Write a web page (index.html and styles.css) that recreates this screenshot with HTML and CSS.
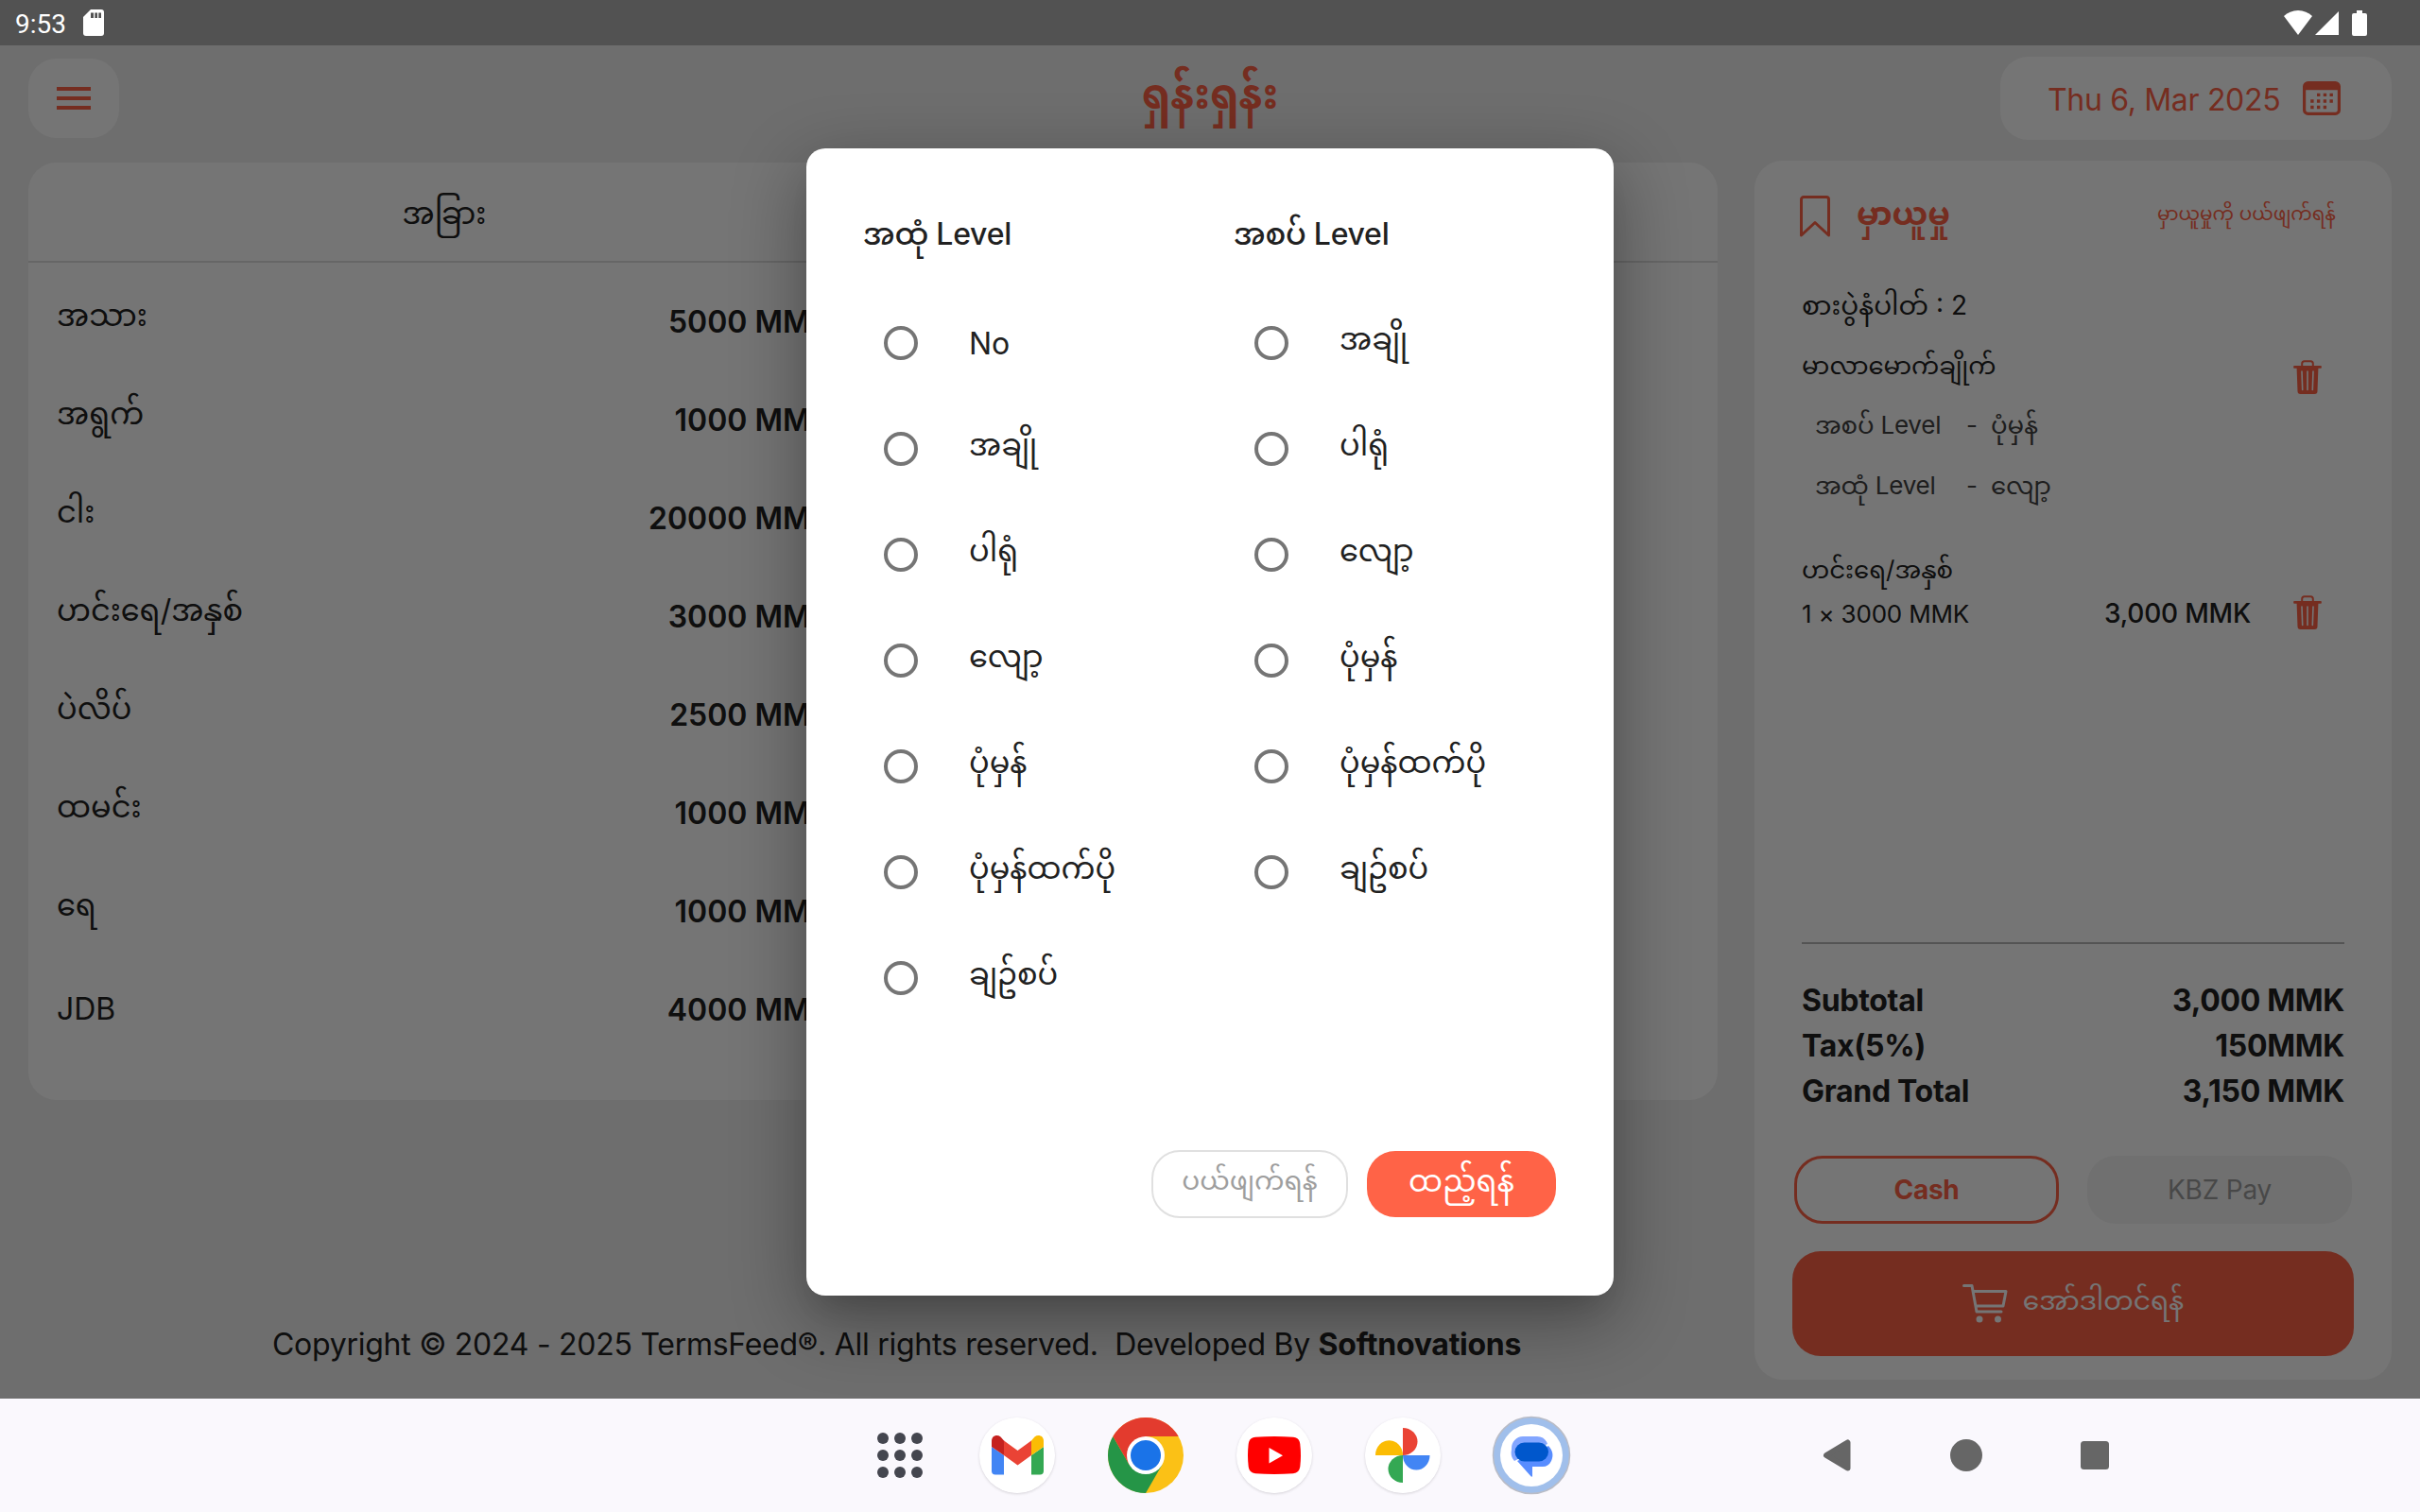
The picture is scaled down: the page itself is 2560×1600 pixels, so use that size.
FILE: index.html
```html
<!DOCTYPE html>
<html lang="my">
<head>
<meta charset="utf-8">
<title>ရှန်းရှန်း</title>
<link rel="stylesheet" href="styles.css">
</head>
<body>
<div class="device">
  <header class="status">
    <span class="clock">9:53</span>
    <svg class="sd" viewBox="0 0 22 28"><path d="M8 0h11a3 3 0 0 1 3 3v22a3 3 0 0 1-3 3H3a3 3 0 0 1-3-3V8z" fill="#fff"/><path d="M8 3.500h3v5.500H8zM12.300 3.500h2.700v5.500h-2.700zM16.300 3.500h2.700v5.500h-2.700z" fill="#525252"/></svg>
    <div class="signals">
      <svg class="wifi" viewBox="0 0 30 26"><path d="M15 0C9 0 4 2.400 0 6l15 20L30 6C26 2.400 21 0 15 0z" fill="#fff"/></svg>
      <svg class="cell" viewBox="0 0 25 25"><path d="M25 0v25H0z" fill="#fff"/></svg>
      <svg class="battery" viewBox="0 0 16 27"><path d="M5 0h6v3h3a2 2 0 0 1 2 2v20a2 2 0 0 1-2 2H2a2 2 0 0 1-2-2V5a2 2 0 0 1 2-2h3z" fill="#fff"/></svg>
    </div>
  </header>

  <div class="app">
    <div class="topbar">
      <button class="menu-btn"><span></span><span></span><span></span></button>
      <h1 class="brand">ရှန်းရှန်း</h1>
      <div class="date">
        <span>Thu 6, Mar 2025</span>
        <svg viewBox="0 0 40 36"><rect x="1.600" y="1.600" width="36.800" height="32.800" rx="4" fill="none" stroke="#ff6347" stroke-width="3.200"/><path d="M1 9.200V5a4 4 0 0 1 4-4h30a4 4 0 0 1 4 4v4.200z" fill="#ff6347"/><g fill="none" stroke="#ff6347" stroke-width="3.400" stroke-dasharray="3.400 3.350"><path d="M15 14.400h20"/><path d="M8.200 21h24"/><path d="M8.200 27.500h17"/></g></svg>
      </div>
    </div>

    <div class="columns">
      <main class="left">
        <section class="menu-card">
          <div class="tabs"><div class="tab">အခြား</div></div>
          <ul class="dishes">
            <li><span class="my">အသား</span><b>5000 MMK</b></li>
            <li><span class="my">အရွက်</span><b>1000 MMK</b></li>
            <li><span class="my">ငါး</span><b>20000 MMK</b></li>
            <li><span class="my">ဟင်းရေ/အနှစ်</span><b>3000 MMK</b></li>
            <li><span class="my">ပဲလိပ်</span><b>2500 MMK</b></li>
            <li><span class="my">ထမင်း</span><b>1000 MMK</b></li>
            <li><span class="my">ရေ</span><b>1000 MMK</b></li>
            <li><span class="latin">JDB</span><b>4000 MMK</b></li>
          </ul>
        </section>
        <footer class="copyright">Copyright © 2024 - 2025 TermsFeed®. All rights reserved.&nbsp; Developed By <b>Softnovations</b></footer>
      </main>

      <aside class="cart">
        <div class="cart-head">
          <svg class="bookmark" viewBox="0 0 32 44"><path d="M4 1.500h24a2.500 2.500 0 0 1 2.500 2.500v38L16 28.500 1.500 42V4A2.500 2.500 0 0 1 4 1.500z" fill="none" stroke="#ff6347" stroke-width="3" stroke-linejoin="round"/></svg>
          <h2>မှာယူမှု</h2>
          <a class="clear">မှာယူမှုကို ပယ်ဖျက်ရန်</a>
        </div>
        <div class="cart-items">
          <div class="line table-no">စားပွဲနံပါတ် : 2</div>
          <div class="item">
            <div class="item-text">
              <div class="line">မာလာမောက်ချိုက်</div>
              <div class="line level"><span>အစပ် Level</span><i>-</i><span>ပုံမှန်</span></div>
              <div class="line level"><span>အထုံ Level</span><i>-</i><span>လျော့</span></div>
            </div>
            <svg class="trash" viewBox="0 0 30 36"><path d="M9.200 7V3.800a2.500 2.500 0 0 1 2.500-2.500h6.600a2.500 2.500 0 0 1 2.500 2.500V7" fill="none" stroke="#ff6347" stroke-width="2"/><path d="M1 6h28a.8.8 0 0 1 .8.800v1.200a.8.800 0 0 1-.8.800h-2.600L25.500 33a3 3 0 0 1-3 3H7.500a3 3 0 0 1-3-3L3.600 8.800H1a.8.800 0 0 1-.8-.800V6.800A.8.800 0 0 1 1 6z" fill="#ff6347"/><path d="M9 12l.7 19.500M15 12v19.500M21 12l-.7 19.500" stroke="#fff" stroke-width="1.600" stroke-linecap="round"/></svg>
          </div>
          <div class="item second">
            <div class="item-text">
              <div class="line">ဟင်းရေ/အနှစ်</div>
              <div class="line qty"><span>1 × 3000 MMK</span><strong>3,000 MMK</strong></div>
            </div>
            <svg class="trash" viewBox="0 0 30 36"><path d="M9.200 7V3.800a2.500 2.500 0 0 1 2.500-2.500h6.600a2.500 2.500 0 0 1 2.500 2.500V7" fill="none" stroke="#ff6347" stroke-width="2"/><path d="M1 6h28a.8.800 0 0 1 .8.800v1.200a.8.800 0 0 1-.8.800h-2.600L25.500 33a3 3 0 0 1-3 3H7.500a3 3 0 0 1-3-3L3.600 8.800H1a.8.800 0 0 1-.8-.800V6.800A.8.800 0 0 1 1 6z" fill="#ff6347"/><path d="M9 12l.7 19.500M15 12v19.500M21 12l-.7 19.500" stroke="#fff" stroke-width="1.600" stroke-linecap="round"/></svg>
          </div>
        </div>
        <div class="totals">
          <div><span>Subtotal</span><span>3,000 MMK</span></div>
          <div><span>Tax(5%)</span><span>150MMK</span></div>
          <div><span>Grand Total</span><span>3,150 MMK</span></div>
        </div>
        <div class="pay">
          <button class="cash">Cash</button>
          <button class="kbz">KBZ Pay</button>
        </div>
        <button class="order">
          <svg viewBox="0 0 48 41"><path d="M1.500 1.500h8.500l5 27.500h26M11.500 7.500h34.500l-3 15.500H14" fill="none" stroke="#fff" stroke-width="3" stroke-linecap="round" stroke-linejoin="round"/><circle cx="18" cy="37" r="3.500" fill="#fff"/><circle cx="37.500" cy="37" r="3.500" fill="#fff"/></svg>
          <span>အော်ဒါတင်ရန်</span>
        </button>
      </aside>
    </div>

    <div class="scrim">
      <div class="dialog">
        <div class="groups">
          <section class="group">
            <h3>အထုံ Level</h3>
            <label><i></i><span>No</span></label>
            <label><i></i><span class="my">အချို</span></label>
            <label><i></i><span class="my">ပါရုံ</span></label>
            <label><i></i><span class="my">လျော့</span></label>
            <label><i></i><span class="my">ပုံမှန်</span></label>
            <label><i></i><span class="my">ပုံမှန်ထက်ပို</span></label>
            <label><i></i><span class="my">ချဥ်စပ်</span></label>
          </section>
          <section class="group">
            <h3>အစပ် Level</h3>
            <label><i></i><span class="my">အချို</span></label>
            <label><i></i><span class="my">ပါရုံ</span></label>
            <label><i></i><span class="my">လျော့</span></label>
            <label><i></i><span class="my">ပုံမှန်</span></label>
            <label><i></i><span class="my">ပုံမှန်ထက်ပို</span></label>
            <label><i></i><span class="my">ချဥ်စပ်</span></label>
          </section>
        </div>
        <div class="actions">
          <button class="cancel">ပယ်ဖျက်ရန်</button>
          <button class="add">ထည့်ရန်</button>
        </div>
      </div>
    </div>
  </div>

  <nav class="taskbar">
    <div class="dock">
      <svg class="grid-icon" viewBox="0 0 50 50"><g fill="#44464f"><circle cx="7" cy="7" r="6"/><circle cx="25" cy="7" r="6"/><circle cx="43" cy="7" r="6"/><circle cx="7" cy="25" r="6"/><circle cx="25" cy="25" r="6"/><circle cx="43" cy="25" r="6"/><circle cx="7" cy="43" r="6"/><circle cx="25" cy="43" r="6"/><circle cx="43" cy="43" r="6"/></g></svg>
      <svg class="app-icon shade" viewBox="0 0 80 80"><circle cx="40" cy="40" r="40" fill="#fff"/><path d="M13 31v25.500a4 4 0 0 0 4 4h9V40z" fill="#4285f4"/><path d="M68 31v25.500a4 4 0 0 1-4 4h-9V40z" fill="#34a853"/><path d="M26 24.500L40.500 35 55 24.500V40L40.500 50.500 26 40z" fill="#ea4335"/><path d="M13 31v-6c0-5.500 5.500-7.500 9.500-4.500l3.500 4V40z" fill="#c5221f"/><path d="M68 31v-6c0-5.500-5.500-7.500-9.500-4.500l-3.500 4V40z" fill="#fbbc04"/></svg>
      <svg class="app-icon" viewBox="0 0 80 80"><circle cx="40" cy="40" r="40" fill="#fbc116"/><path d="M40 40L22.680 50 5.360 20A40 40 0 0 0 40 80L57.320 50z" fill="#259547"/><path d="M5.360 20A40 40 0 0 1 74.640 20H40L22.680 50z" fill="#e33b2e"/><circle cx="40" cy="40" r="20" fill="#fff"/><circle cx="40" cy="40" r="16" fill="#1a73e8"/></svg>
      <svg class="app-icon shade" viewBox="0 0 80 80"><circle cx="40" cy="40" r="40" fill="#fff"/><path d="M20 20.800Q40 19.200 60 20.800Q66.500 21.400 67.300 28Q68.700 40 67.300 52Q66.500 58.600 60 59.200Q40 60.800 20 59.200Q13.500 58.600 12.700 52Q11.300 40 12.700 28Q13.500 21.400 20 20.800z" fill="#f00"/><path d="M34.500 32v16.500l14.500-8.200z" fill="#fff"/></svg>
      <svg class="app-icon shade" viewBox="0 0 80 80"><circle cx="40" cy="40" r="40" fill="#fff"/><path d="M40 11a15.500 14.500 0 0 1 0 29z" fill="#ea4335"/><path d="M11 40a14.500 15.800 0 0 1 29 0z" fill="#fbbc04"/><path d="M40 40h28.500a14.200 15.500 0 0 1-28.500 0z" fill="#4285f4"/><path d="M40 40v29a15.500 14.500 0 0 1 0-29z" fill="#34a853"/></svg>
      <svg class="app-icon messages" viewBox="0 0 84 84"><circle cx="42" cy="42" r="40.500" fill="#a0bfeb" stroke="#b9bcc6" stroke-width="1.500"/><circle cx="42" cy="42" r="33" fill="#fff"/><path d="M33 22h15a12 12 0 0 1 11 8L24 48a13.500 13.500 0 0 1-3-12v-1a12.500 12.500 0 0 1 12-13z" fill="#83a6ff"/><path d="M60 32c5 5 5.500 11 3 16-2 4-5 6-9 6H43v10c0 .8-1 .8-1.500.2L27 48z" fill="#588dff"/><rect x="24.500" y="28.500" width="35.500" height="20" rx="10" fill="#0057cc"/></svg>
    </div>
    <div class="sys">
      <svg viewBox="0 0 36 36"><path d="M6 18L28.500 4.500v27z" fill="#666" stroke="#666" stroke-width="6" stroke-linejoin="round"/></svg>
      <svg viewBox="0 0 36 36"><circle cx="18" cy="18" r="17" fill="#666"/></svg>
      <svg viewBox="0 0 36 36"><rect x="3" y="3" width="30" height="30" rx="3.500" fill="#666"/></svg>
    </div>
  </nav>
</div>
</body>
</html>
```
FILE: styles.css
```css
* { box-sizing: border-box; margin: 0; padding: 0; }

body {
  width: 2560px;
  height: 1600px;
  overflow: hidden;
  font-family: Inter, "Noto Sans Myanmar", sans-serif;
  font-size: 32px;
  line-height: 48px;
  color: #212121;
}

button { font: inherit; border: 0; background: none; }
svg { display: block; flex: none; }
i { font-style: normal; }
.my { padding-bottom: 11px; }

.device { display: flex; flex-direction: column; height: 1600px; }

/* status bar */
.status {
  display: flex;
  align-items: center;
  height: 48px;
  padding: 0 56px 0 16px;
  background: #525252;
}
.clock { font: 28px/48px Roboto, sans-serif; color: #fff; padding-top: 4px; }
.sd { width: 22px; height: 28px; margin-left: 18px; }
.signals { display: flex; align-items: center; margin-left: auto; }
.wifi { width: 30px; height: 26px; }
.cell { width: 25px; height: 25px; margin: 1px 14px 0 3px; }
.battery { width: 16px; height: 27px; }

/* app */
.app {
  position: relative;
  flex: 1;
  display: flex;
  flex-direction: column;
  background: #f0f0f0;
}
.topbar {
  display: grid;
  grid-template-columns: 1fr auto 1fr;
  align-items: center;
  height: 88px;
  margin: 12px 30px 0;
}
.menu-btn {
  display: flex;
  flex-direction: column;
  align-items: center;
  justify-content: center;
  gap: 6px;
  width: 96px;
  height: 84px;
  border-radius: 30px;
  background: #fff;
}
.menu-btn span { width: 36px; height: 4px; background: #ff6347; }
.brand { font-size: 44px; font-weight: 700; color: #ff6347; padding-bottom: 11px; }
.date {
  justify-self: end;
  display: flex;
  align-items: center;
  justify-content: space-between;
  width: 414px;
  height: 88px;
  padding: 0 54px 0 50px;
  border-radius: 30px;
  background: #fff;
  color: #ff6347;
  white-space: nowrap;
}
.date span { padding-top: 4px; letter-spacing: -.32px; }
.date svg { width: 40px; height: 36px; }

.columns { flex: 1; display: flex; justify-content: space-between; padding: 22px 30px 20px; }
.left { width: 1787px; display: flex; flex-direction: column; padding-top: 2px; }

.menu-card { height: 992px; border-radius: 30px; background: #fff; }
.tabs { display: flex; height: 106px; border-bottom: 2px solid #dedede; }
.tab { width: 880px; text-align: center; line-height: 104px; padding-top: 2px; }
.dishes { list-style: none; width: 880px; padding: 9px 0 0 30px; }
.dishes li { display: flex; align-items: center; justify-content: space-between; height: 104px; padding-right: 30px; }
.dishes b { font-weight: 600; padding-top: 3px; }
.latin { padding-top: 2px; }

.copyright { margin-top: auto; padding: 0 0 13px 258px; white-space: nowrap; letter-spacing: -.27px; }
.copyright b { font-weight: 700; }

/* cart */
.cart {
  display: flex;
  flex-direction: column;
  width: 674px;
  padding: 29px 50px 25px;
  border-radius: 30px;
  background: #fff;
}
.cart-head { display: flex; align-items: center; height: 60px; color: #ff6347; }
.bookmark { width: 32px; height: 44px; margin-left: -2px; }
.cart-head h2 { font-size: 34px; font-weight: 700; margin-left: 28px; padding-bottom: 6px; }
.clear { font-size: 20px; margin-left: auto; margin-right: 9px; padding-bottom: 6px; }

.cart-items { flex: 1; padding-top: 33px; font-size: 26px; }
.cart-items .line { line-height: 63.5px; }
.cart-items .table-no { font-size: 28px; line-height: 62.5px; }
.item { display: flex; justify-content: space-between; padding-right: 24px; }
.item-text { flex: 1; }
.trash { width: 30px; height: 36px; margin-top: 26px; }
.level { display: flex; padding-left: 14px; color: #424242; }
.level span:first-child { width: 160px; letter-spacing: -.2px; }
.level i { width: 26px; }
.item.second { margin-top: 34px; }
.second .item-text .line { line-height: 47px; }
.second .trash { margin: 51px 0 0 45px; }
.qty { display: flex; justify-content: space-between; letter-spacing: -.2px; }
.qty strong { font-size: 28px; font-weight: 500; }

.totals { border-top: 2px solid #b8b8b8; padding-top: 36px; font-weight: 700; letter-spacing: -.3px; }
.totals div { display: flex; justify-content: space-between; }
.pay { display: flex; justify-content: space-between; margin: 44px -8px 29px; font-size: 28px; }
.pay button { width: 280px; height: 72px; border-radius: 30px; }
.cash { border: 3px solid #ff6347; color: #ff6347; font-weight: 700; letter-spacing: -.3px; }
.kbz { background: #f5f5f5; color: #9e9e9e; letter-spacing: -.2px; }
.order {
  display: flex;
  align-items: center;
  justify-content: center;
  gap: 16px;
  height: 111px;
  margin: 0 -10px;
  border-radius: 30px;
  background: #ff6347;
  color: #fff;
  font-size: 28px;
}
.order svg { width: 48px; height: 41px; }
.order span { padding-bottom: 7px; }

/* dialog */
.scrim {
  position: absolute;
  inset: 0;
  display: flex;
  align-items: center;
  justify-content: center;
  background: rgba(0, 0, 0, .54);
}
.dialog {
  display: flex;
  flex-direction: column;
  width: 854px;
  height: 1214px;
  padding: 67px 61px 82px 60px;
  border-radius: 20px;
  background: #fff;
  box-shadow: 0 22px 30px -14px rgba(0, 0, 0, .12), 0 24px 76px 4px rgba(0, 0, 0, .33);
}
.groups { display: flex; }
.group { flex: none; width: 392px; }
.group h3 { font-size: 32px; font-weight: 500; margin-bottom: 35px; letter-spacing: -.25px; }
.group label { display: flex; align-items: center; height: 112px; padding-left: 22px; }
.group label i { width: 36px; height: 36px; margin-right: 54px; border: 4px solid #757575; border-radius: 50%; }
.group label span { padding-top: 2px; }
.actions { display: flex; align-items: center; justify-content: flex-end; gap: 20px; margin-top: auto; }
.cancel { width: 208px; height: 72px; border: 2px solid #e0e0e0; border-radius: 30px; color: #9e9e9e; font-size: 28px; padding-bottom: 8px; }
.add { width: 200px; height: 70px; border-radius: 30px; background: #ff6347; color: #fff; padding-bottom: 7px; }

/* system taskbar */
.taskbar {
  display: flex;
  align-items: center;
  height: 120px;
  padding-left: 927px;
  background: #faf8fd;
}
.dock { display: flex; align-items: center; }
.grid-icon { width: 50px; height: 50px; margin-right: 59px; }
.app-icon { width: 80px; height: 80px; margin-right: 56px; }
.shade { border-radius: 50%; box-shadow: 0 1px 3px rgba(0, 0, 0, .15); }
.app-icon.messages { width: 84px; height: 84px; margin: 0 0 0 -2px; }
.sys { display: flex; gap: 100px; margin-left: 264px; }
.sys svg { width: 36px; height: 36px; }
```
